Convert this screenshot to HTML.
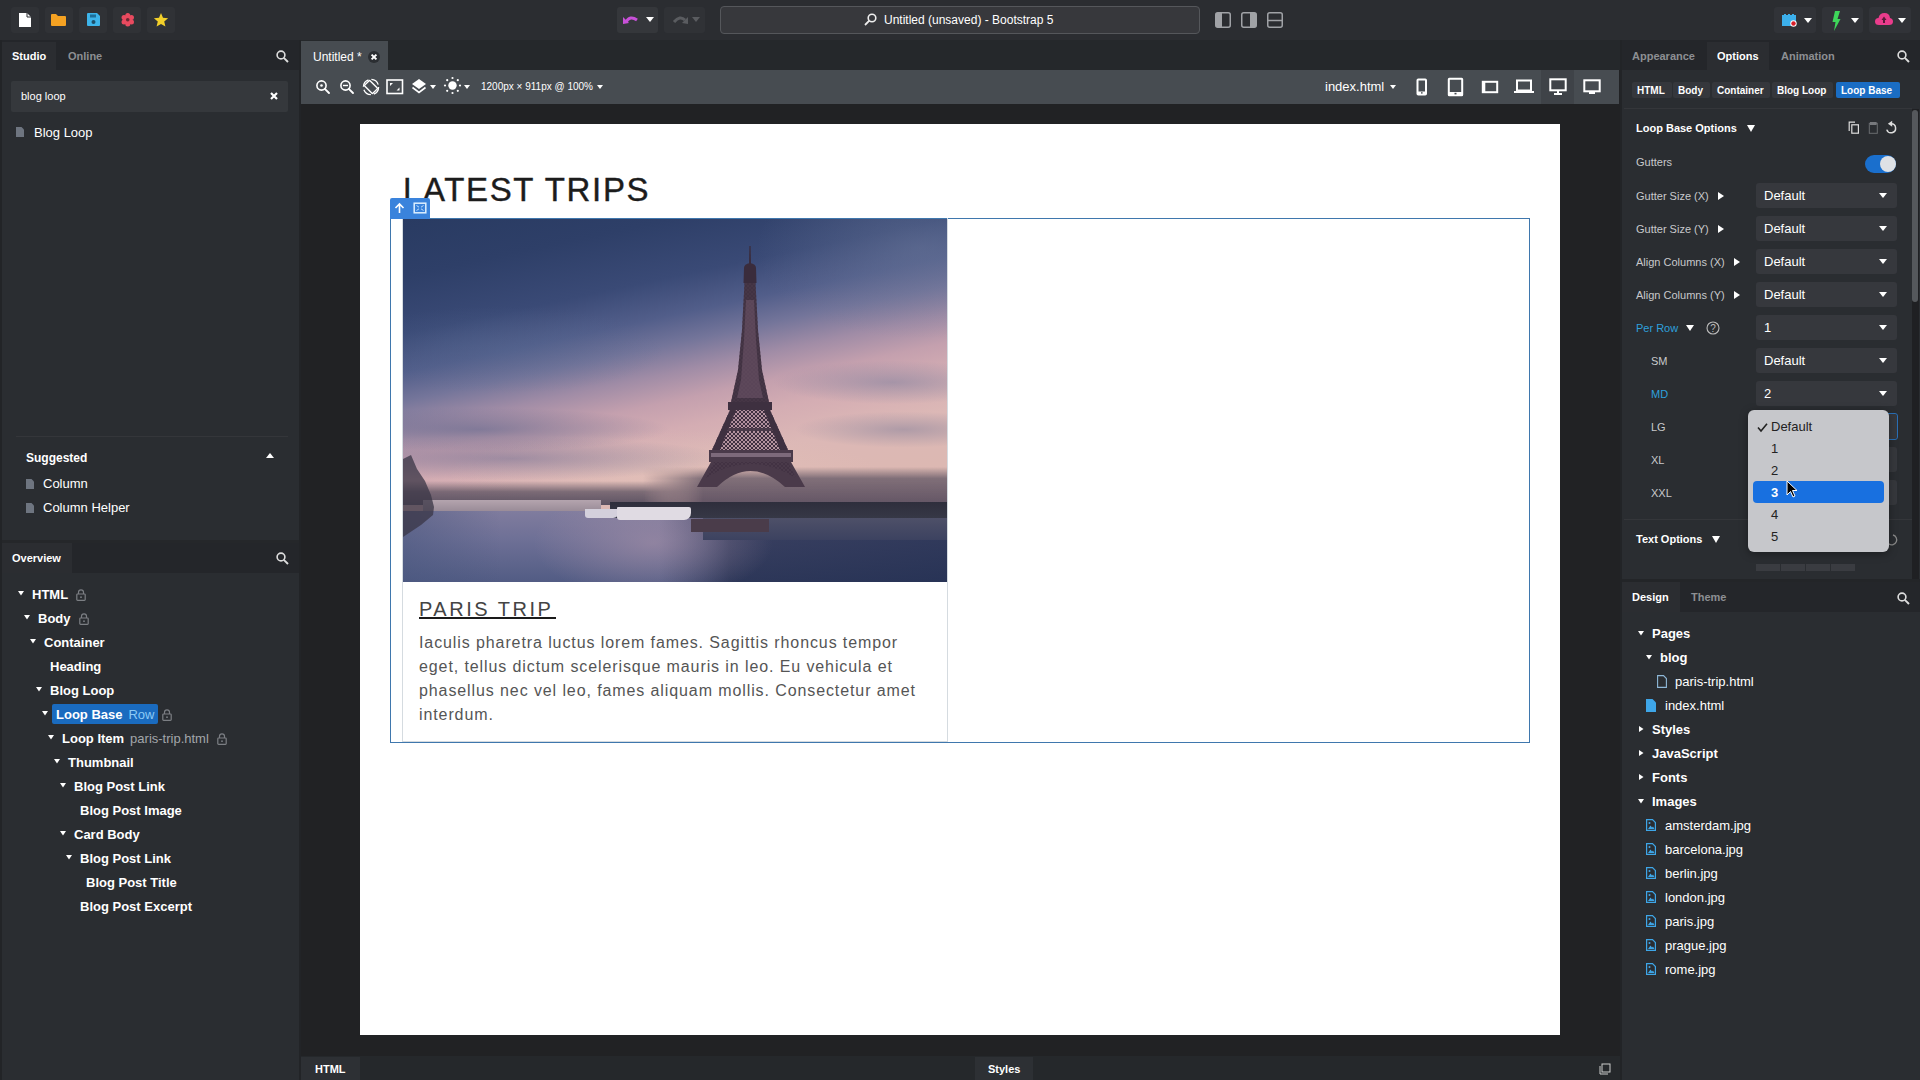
<!DOCTYPE html>
<html><head><meta charset="utf-8">
<style>
*{box-sizing:border-box;margin:0;padding:0}
html,body{width:1920px;height:1080px;overflow:hidden;background:#2a2c30;font-family:"Liberation Sans",sans-serif;color:#fff}
.a{position:absolute}
.t{position:absolute;line-height:1;white-space:nowrap}
svg.a{display:block;overflow:visible}
</style></head><body>

<div class="a" style="left:0px;top:0px;width:1920px;height:40px;background:#2b2d31;"></div>
<div class="a" style="left:11px;top:7px;width:28px;height:26px;background:#303236;border-radius:3px;"></div>
<div class="a" style="left:45px;top:7px;width:28px;height:26px;background:#303236;border-radius:3px;"></div>
<div class="a" style="left:79px;top:7px;width:28px;height:26px;background:#303236;border-radius:3px;"></div>
<div class="a" style="left:113px;top:7px;width:28px;height:26px;background:#303236;border-radius:3px;"></div>
<div class="a" style="left:147px;top:7px;width:28px;height:26px;background:#303236;border-radius:3px;"></div>
<svg class="a" style="left:19px;top:13px;" width="12" height="14" viewBox="0 0 12 14"><path d="M0 0H8L12 4V14H0Z" fill="#fff"/><path d="M8 0V4H12" fill="none" stroke="#2b2d31" stroke-width="1"/></svg>
<svg class="a" style="left:51px;top:14px;" width="15" height="12" viewBox="0 0 15 12"><path d="M0 1Q0 0 1 0H5L7 2H14Q15 2 15 3V11Q15 12 14 12H1Q0 12 0 11Z" fill="#f5a222"/></svg>
<svg class="a" style="left:87px;top:13px;" width="13" height="13" viewBox="0 0 13 13"><path d="M0 1Q0 0 1 0H10L13 3V12Q13 13 12 13H1Q0 13 0 12Z" fill="#3db4ea"/><rect x="3" y="1.5" width="6" height="3" fill="#1d6f9a"/><circle cx="6.5" cy="9" r="2" fill="#1d4f6a"/></svg>
<svg class="a" style="left:120.5px;top:13.25px;" width="13.5" height="13.5" viewBox="0 0 13.5 13.5"><circle cx="6.75" cy="6.75" r="4.6" fill="#e84a5f"/><circle cx="6.75" cy="2.45" r="2.5" fill="#e84a5f"/><circle cx="10.47" cy="4.60" r="2.5" fill="#e84a5f"/><circle cx="10.47" cy="8.90" r="2.5" fill="#e84a5f"/><circle cx="6.75" cy="11.05" r="2.5" fill="#e84a5f"/><circle cx="3.03" cy="8.90" r="2.5" fill="#e84a5f"/><circle cx="3.03" cy="4.60" r="2.5" fill="#e84a5f"/><circle cx="6.75" cy="6.75" r="1.8" fill="#6a2832"/></svg>
<svg class="a" style="left:153px;top:12px;" width="16" height="16" viewBox="0 0 16 16"><polygon points="8.00,1.00 10.00,5.75 15.13,6.18 11.23,9.55 12.41,14.57 8.00,11.90 3.59,14.57 4.77,9.55 0.87,6.18 6.00,5.75" fill="#f3d02a"/></svg>
<div class="a" style="left:617px;top:7px;width:41px;height:26px;background:#35373b;border-radius:3px;"></div>
<div class="a" style="left:664px;top:7px;width:41px;height:26px;background:#303236;border-radius:3px;"></div>
<svg class="a" style="left:623px;top:14px;" width="17" height="10" viewBox="0 0 17 10"><path d="M3 8Q7 1 14 6" fill="none" stroke="#c850d8" stroke-width="3"/><path d="M0 3L6 9L0 10Z" fill="#c850d8"/></svg>
<svg class="a" style="left:646.0px;top:17.0px;" width="8" height="5" viewBox="0 0 8 5"><path d="M0 0H8L4.0 5Z" fill="#fff"/></svg>
<svg class="a" style="left:672px;top:14px;" width="16" height="10" viewBox="0 0 16 10"><path d="M2 8Q8 1 13 6" fill="none" stroke="#5a5c60" stroke-width="3"/><path d="M16 3L10 9L16 10Z" fill="#5a5c60"/></svg>
<svg class="a" style="left:692.0px;top:17.0px;" width="8" height="5" viewBox="0 0 8 5"><path d="M0 0H8L4.0 5Z" fill="#5a5c60"/></svg>
<div class="a" style="left:720px;top:6px;width:480px;height:28px;background:#37383c;border:1px solid #55575b;border-radius:4px;"></div>
<svg class="a" style="left:864px;top:13px;" width="13" height="13" viewBox="0 0 13 13"><circle cx="8" cy="5" r="3.8" fill="none" stroke="#eee" stroke-width="1.6"/><path d="M5.3 7.7L1 12" stroke="#eee" stroke-width="1.8"/></svg>
<div class="t" style="left:884px;top:13.84px;font-size:12px;color:#fff;">Untitled (unsaved) - Bootstrap 5</div>
<svg class="a" style="left:1215px;top:12px;" width="16" height="16" viewBox="0 0 16 16"><rect x="0.75" y="0.75" width="14.5" height="14.5" rx="2" fill="none" stroke="#a0a2a6" stroke-width="1.5"/><rect x="1" y="1" width="6" height="14" fill="#a0a2a6"/></svg>
<svg class="a" style="left:1241px;top:12px;" width="16" height="16" viewBox="0 0 16 16"><rect x="0.75" y="0.75" width="14.5" height="14.5" rx="2" fill="none" stroke="#a0a2a6" stroke-width="1.5"/><rect x="9" y="1" width="6" height="14" fill="#a0a2a6"/></svg>
<svg class="a" style="left:1267px;top:12px;" width="16" height="16" viewBox="0 0 16 16"><rect x="0.75" y="0.75" width="14.5" height="14.5" rx="2" fill="none" stroke="#a0a2a6" stroke-width="1.5"/><path d="M1 8.5H15" stroke="#a0a2a6" stroke-width="1.5"/></svg>
<div class="a" style="left:1774px;top:7px;width:42px;height:26px;background:#313338;border-radius:3px;"></div>
<div class="a" style="left:1822px;top:7px;width:41px;height:26px;background:#313338;border-radius:3px;"></div>
<div class="a" style="left:1869px;top:7px;width:42px;height:26px;background:#313338;border-radius:3px;"></div>
<svg class="a" style="left:1782px;top:14px;" width="15" height="13" viewBox="0 0 15 13"><path d="M0 1H2V0H4V1H6V0H8V1H10V0H12V1H14V12H0Z" fill="#3cb0ec"/><circle cx="11.5" cy="9.5" r="3.2" fill="#fff"/><circle cx="11.5" cy="9.5" r="2.2" fill="#d81e2a"/></svg>
<svg class="a" style="left:1804.0px;top:17.5px;" width="8" height="5" viewBox="0 0 8 5"><path d="M0 0H8L4.0 5Z" fill="#fff"/></svg>
<svg class="a" style="left:1832px;top:11px;" width="9" height="20" viewBox="0 0 9 20"><path d="M3 0H8L5.5 8H8.5L2 20L3.5 11H0.5Z" fill="#3ed65a"/></svg>
<svg class="a" style="left:1851.0px;top:17.5px;" width="8" height="5" viewBox="0 0 8 5"><path d="M0 0H8L4.0 5Z" fill="#fff"/></svg>
<svg class="a" style="left:1875px;top:13px;" width="18" height="12" viewBox="0 0 18 12"><path d="M4 12Q0 12 0 8.5Q0 5 3.5 5Q4.5 0 9.5 0Q14.5 0 15 5Q18 5.5 18 8.5Q18 12 14 12Z" fill="#ea3c8c"/><path d="M9 3.5L6.5 7H8V10H10V7H11.5Z" fill="#5a1a3a"/></svg>
<svg class="a" style="left:1898.0px;top:17.5px;" width="8" height="5" viewBox="0 0 8 5"><path d="M0 0H8L4.0 5Z" fill="#fff"/></svg>
<div class="a" style="left:0px;top:40px;width:300px;height:1040px;background:#2a2d31;"></div>
<div class="a" style="left:0px;top:40px;width:2px;height:1040px;background:#222427;"></div>
<div class="a" style="left:299px;top:40px;width:2px;height:1040px;background:#222427;"></div>
<div class="a" style="left:2px;top:40px;width:297px;height:30px;background:#24262a;"></div>
<div class="a" style="left:2px;top:42px;width:54px;height:28px;background:#2b2d31;"></div>
<div class="t" style="left:12px;top:50.69px;font-size:11px;font-weight:bold;color:#fff;">Studio</div>
<div class="t" style="left:68px;top:50.69px;font-size:11px;font-weight:bold;color:#8d8f93;">Online</div>
<svg class="a" style="left:276px;top:50px;" width="13" height="13" viewBox="0 0 13 13"><circle cx="5" cy="5" r="3.9" fill="none" stroke="#ddd" stroke-width="1.6"/><path d="M7.8 7.8L12 12" stroke="#ddd" stroke-width="1.9"/></svg>
<div class="a" style="left:11px;top:81px;width:277px;height:31px;background:#35383c;border-radius:2px;"></div>
<div class="t" style="left:21px;top:91.19px;font-size:11px;color:#fff;">blog loop</div>
<svg class="a" style="left:270px;top:92px;" width="8" height="8" viewBox="0 0 8 8"><path d="M1 1L7 7M7 1L1 7" stroke="#fff" stroke-width="2.2"/></svg>
<svg class="a" style="left:16px;top:127px;" width="8" height="10" viewBox="0 0 8 10"><path d="M0 0H5.5L8 2.5V10H0Z" fill="#6e7580"/></svg>
<div class="t" style="left:34px;top:126.00px;font-size:13px;color:#fff;">Blog Loop</div>
<div class="a" style="left:16px;top:436px;width:272px;height:1px;background:#34363a;"></div>
<div class="t" style="left:26px;top:451.84px;font-size:12px;font-weight:bold;color:#fff;">Suggested</div>
<svg class="a" style="left:266.0px;top:452.5px;" width="8" height="5" viewBox="0 0 8 5"><path d="M0 5H8L4.0 0Z" fill="#fff"/></svg>
<svg class="a" style="left:26px;top:479px;" width="8" height="10" viewBox="0 0 8 10"><path d="M0 0H5.5L8 2.5V10H0Z" fill="#6e7580"/></svg>
<div class="t" style="left:43px;top:477.00px;font-size:13px;color:#fff;">Column</div>
<svg class="a" style="left:26px;top:503px;" width="8" height="10" viewBox="0 0 8 10"><path d="M0 0H5.5L8 2.5V10H0Z" fill="#6e7580"/></svg>
<div class="t" style="left:43px;top:501.00px;font-size:13px;color:#fff;">Column Helper</div>
<div class="a" style="left:2px;top:540px;width:297px;height:3px;background:#25272a;"></div>
<div class="a" style="left:2px;top:543px;width:297px;height:30px;background:#24262a;"></div>
<div class="a" style="left:2px;top:543px;width:70px;height:30px;background:#2b2d31;"></div>
<div class="t" style="left:12px;top:552.69px;font-size:11px;font-weight:bold;color:#fff;">Overview</div>
<svg class="a" style="left:276px;top:552px;" width="13" height="13" viewBox="0 0 13 13"><circle cx="5" cy="5" r="3.9" fill="none" stroke="#ddd" stroke-width="1.6"/><path d="M7.8 7.8L12 12" stroke="#ddd" stroke-width="1.9"/></svg>
<svg class="a" style="left:18.0px;top:590.75px;" width="6" height="4.5" viewBox="0 0 6 4.5"><path d="M0 0H6L3.0 4.5Z" fill="#fff"/></svg>
<div class="t" style="left:32px;top:588.00px;font-size:13px;font-weight:bold;color:#fff;">HTML</div>
<svg class="a" style="left:76.09375px;top:588.5px;" width="10" height="12" viewBox="0 0 10 12"><path d="M2.5 5V3.2Q2.5 0.8 5 0.8Q7.5 0.8 7.5 3.2V5" fill="none" stroke="#7c7f84" stroke-width="1.2"/><rect x="0.8" y="5" width="8.4" height="6.4" rx="0.8" fill="none" stroke="#7c7f84" stroke-width="1.2"/><circle cx="5" cy="8.2" r="0.9" fill="#7c7f84"/></svg>
<svg class="a" style="left:24.0px;top:614.75px;" width="6" height="4.5" viewBox="0 0 6 4.5"><path d="M0 0H6L3.0 4.5Z" fill="#fff"/></svg>
<div class="t" style="left:38px;top:612.00px;font-size:13px;font-weight:bold;color:#fff;">Body</div>
<svg class="a" style="left:78.5px;top:612.5px;" width="10" height="12" viewBox="0 0 10 12"><path d="M2.5 5V3.2Q2.5 0.8 5 0.8Q7.5 0.8 7.5 3.2V5" fill="none" stroke="#7c7f84" stroke-width="1.2"/><rect x="0.8" y="5" width="8.4" height="6.4" rx="0.8" fill="none" stroke="#7c7f84" stroke-width="1.2"/><circle cx="5" cy="8.2" r="0.9" fill="#7c7f84"/></svg>
<svg class="a" style="left:30.0px;top:638.75px;" width="6" height="4.5" viewBox="0 0 6 4.5"><path d="M0 0H6L3.0 4.5Z" fill="#fff"/></svg>
<div class="t" style="left:44px;top:636.00px;font-size:13px;font-weight:bold;color:#fff;">Container</div>
<div class="t" style="left:50px;top:660.00px;font-size:13px;font-weight:bold;color:#fff;">Heading</div>
<svg class="a" style="left:36.0px;top:686.75px;" width="6" height="4.5" viewBox="0 0 6 4.5"><path d="M0 0H6L3.0 4.5Z" fill="#fff"/></svg>
<div class="t" style="left:50px;top:684.00px;font-size:13px;font-weight:bold;color:#fff;">Blog Loop</div>
<div class="a" style="left:52px;top:704px;width:106px;height:20px;background:#1a6bbf;border-radius:2px;"></div>
<svg class="a" style="left:42.0px;top:710.75px;" width="6" height="4.5" viewBox="0 0 6 4.5"><path d="M0 0H6L3.0 4.5Z" fill="#fff"/></svg>
<div class="t" style="left:56px;top:708.00px;font-size:13px;font-weight:bold;color:#fff;">Loop Base</div>
<div class="t" style="left:128.453125px;top:708.00px;font-size:13px;color:#8ccaf5;">Row</div>
<svg class="a" style="left:162.46875px;top:708.5px;" width="10" height="12" viewBox="0 0 10 12"><path d="M2.5 5V3.2Q2.5 0.8 5 0.8Q7.5 0.8 7.5 3.2V5" fill="none" stroke="#7c7f84" stroke-width="1.2"/><rect x="0.8" y="5" width="8.4" height="6.4" rx="0.8" fill="none" stroke="#7c7f84" stroke-width="1.2"/><circle cx="5" cy="8.2" r="0.9" fill="#7c7f84"/></svg>
<svg class="a" style="left:48.0px;top:734.75px;" width="6" height="4.5" viewBox="0 0 6 4.5"><path d="M0 0H6L3.0 4.5Z" fill="#fff"/></svg>
<div class="t" style="left:62px;top:732.00px;font-size:13px;font-weight:bold;color:#fff;">Loop Item</div>
<div class="t" style="left:130.09375px;top:732.00px;font-size:13px;color:#a3a6aa;">paris-trip.html</div>
<svg class="a" style="left:216.84375px;top:732.5px;" width="10" height="12" viewBox="0 0 10 12"><path d="M2.5 5V3.2Q2.5 0.8 5 0.8Q7.5 0.8 7.5 3.2V5" fill="none" stroke="#7c7f84" stroke-width="1.2"/><rect x="0.8" y="5" width="8.4" height="6.4" rx="0.8" fill="none" stroke="#7c7f84" stroke-width="1.2"/><circle cx="5" cy="8.2" r="0.9" fill="#7c7f84"/></svg>
<svg class="a" style="left:54.0px;top:758.75px;" width="6" height="4.5" viewBox="0 0 6 4.5"><path d="M0 0H6L3.0 4.5Z" fill="#fff"/></svg>
<div class="t" style="left:68px;top:756.00px;font-size:13px;font-weight:bold;color:#fff;">Thumbnail</div>
<svg class="a" style="left:60.0px;top:782.75px;" width="6" height="4.5" viewBox="0 0 6 4.5"><path d="M0 0H6L3.0 4.5Z" fill="#fff"/></svg>
<div class="t" style="left:74px;top:780.00px;font-size:13px;font-weight:bold;color:#fff;">Blog Post Link</div>
<div class="t" style="left:80px;top:804.00px;font-size:13px;font-weight:bold;color:#fff;">Blog Post Image</div>
<svg class="a" style="left:60.0px;top:830.75px;" width="6" height="4.5" viewBox="0 0 6 4.5"><path d="M0 0H6L3.0 4.5Z" fill="#fff"/></svg>
<div class="t" style="left:74px;top:828.00px;font-size:13px;font-weight:bold;color:#fff;">Card Body</div>
<svg class="a" style="left:66.0px;top:854.75px;" width="6" height="4.5" viewBox="0 0 6 4.5"><path d="M0 0H6L3.0 4.5Z" fill="#fff"/></svg>
<div class="t" style="left:80px;top:852.00px;font-size:13px;font-weight:bold;color:#fff;">Blog Post Link</div>
<div class="t" style="left:86px;top:876.00px;font-size:13px;font-weight:bold;color:#fff;">Blog Post Title</div>
<div class="t" style="left:80px;top:900.00px;font-size:13px;font-weight:bold;color:#fff;">Blog Post Excerpt</div>
<div class="a" style="left:301px;top:40px;width:1319px;height:1040px;background:#212224;"></div>
<div class="a" style="left:301px;top:40px;width:1319px;height:30px;background:#25282b;"></div>
<div class="a" style="left:301px;top:41px;width:87px;height:29px;background:#474c51;"></div>
<div class="t" style="left:313px;top:50.84px;font-size:12px;color:#fff;">Untitled *</div>
<svg class="a" style="left:368px;top:50.5px;" width="12" height="12" viewBox="0 0 12 12"><circle cx="6" cy="6" r="6" fill="#2b2e32"/><path d="M3.6 3.6L8.4 8.4M8.4 3.6L3.6 8.4" stroke="#fff" stroke-width="2"/></svg>
<div class="a" style="left:301px;top:70px;width:1318px;height:34px;background:#474c51;"></div>
<svg class="a" style="left:314.5px;top:78.5px;" width="16" height="16" viewBox="0 0 16 16"><circle cx="6.5" cy="6.5" r="4.6" fill="none" stroke="#fff" stroke-width="1.6"/><path d="M9.8 9.8L14 14" stroke="#fff" stroke-width="1.9" stroke-linecap="round"/><circle cx="6.5" cy="6.5" r="1.3" fill="#fff"/></svg>
<svg class="a" style="left:338.5px;top:78.5px;" width="16" height="16" viewBox="0 0 16 16"><circle cx="6.5" cy="6.5" r="4.6" fill="none" stroke="#fff" stroke-width="1.6"/><path d="M9.8 9.8L14 14" stroke="#fff" stroke-width="1.9" stroke-linecap="round"/><path d="M4 6.5H9" stroke="#fff" stroke-width="1.4"/></svg>
<svg class="a" style="left:362px;top:78px;" width="18" height="18" viewBox="0 0 18 18"><circle cx="9" cy="9" r="7.6" fill="none" stroke="#fff" stroke-width="1.3" stroke-dasharray="9 3"/><rect x="5.2" y="3.2" width="7.6" height="11.6" rx="1" transform="rotate(-45 9 9)" fill="none" stroke="#fff" stroke-width="1.4"/></svg>
<svg class="a" style="left:386px;top:79px;" width="18" height="16" viewBox="0 0 18 16"><rect x="1" y="1" width="15.5" height="13.5" fill="none" stroke="#fff" stroke-width="1.6"/><path d="M4 4L7 4L4 7Z M13.5 11.5L10.5 11.5L13.5 8.5Z" fill="#fff"/></svg>
<svg class="a" style="left:411px;top:78px;" width="16" height="17" viewBox="0 0 16 17"><path d="M8 1L15 6L8 11L1 6Z" fill="#fff"/><path d="M1.5 9.5L8 14.5L14.5 9.5" fill="none" stroke="#fff" stroke-width="1.6"/></svg>
<svg class="a" style="left:430.0px;top:85.0px;" width="6" height="4" viewBox="0 0 6 4"><path d="M0 0H6L3.0 4Z" fill="#fff"/></svg>
<svg class="a" style="left:444px;top:77px;" width="17" height="17" viewBox="0 0 17 17"><circle cx="8.5" cy="8.5" r="4.2" fill="#fff"/><circle cx="16.00" cy="8.50" r="1.1" fill="#fff"/><circle cx="13.80" cy="13.80" r="1.1" fill="#fff"/><circle cx="8.50" cy="16.00" r="1.1" fill="#fff"/><circle cx="3.20" cy="13.80" r="1.1" fill="#fff"/><circle cx="1.00" cy="8.50" r="1.1" fill="#fff"/><circle cx="3.20" cy="3.20" r="1.1" fill="#fff"/><circle cx="8.50" cy="1.00" r="1.1" fill="#fff"/><circle cx="13.80" cy="3.20" r="1.1" fill="#fff"/></svg>
<svg class="a" style="left:464.0px;top:85.0px;" width="6" height="4" viewBox="0 0 6 4"><path d="M0 0H6L3.0 4Z" fill="#fff"/></svg>
<div class="t" style="left:481px;top:81.53px;font-size:10px;color:#fff;">1200px × 911px @ 100%</div>
<svg class="a" style="left:597.0px;top:85.0px;" width="6" height="4" viewBox="0 0 6 4"><path d="M0 0H6L3.0 4Z" fill="#fff"/></svg>
<div class="t" style="left:1325px;top:80.00px;font-size:13px;color:#fff;">index.html</div>
<svg class="a" style="left:1390.0px;top:85.0px;" width="6" height="4" viewBox="0 0 6 4"><path d="M0 0H6L3.0 4Z" fill="#fff"/></svg>
<div class="a" style="left:1707px;top:70px;width:0px;height:0px;background:#000;"></div>
<div class="a" style="left:1541px;top:70px;width:33px;height:34px;background:#3f4348;"></div>
<svg class="a" style="left:1416px;top:78px;" width="12" height="18" viewBox="0 0 12 18"><rect x="1.5" y="1.5" width="8.5" height="15" rx="0.8" fill="none" stroke="#fff" stroke-width="2"/><rect x="1.5" y="13.5" width="8.5" height="3" fill="#fff"/><rect x="5" y="14.2" width="1.6" height="1.4" fill="#474c51"/></svg>
<svg class="a" style="left:1447px;top:77px;" width="17" height="20" viewBox="0 0 17 20"><rect x="1.8" y="1.8" width="13.4" height="16.4" rx="0.5" fill="none" stroke="#fff" stroke-width="2"/><rect x="1.8" y="15" width="13.4" height="3.2" fill="#fff"/><rect x="7.5" y="15.8" width="2" height="1.6" fill="#474c51"/></svg>
<svg class="a" style="left:1481px;top:80px;" width="18" height="14" viewBox="0 0 18 14"><rect x="1.8" y="1.8" width="14.4" height="10.4" fill="none" stroke="#fff" stroke-width="2"/><rect x="1.8" y="1.8" width="2.5" height="10.4" fill="#fff"/></svg>
<svg class="a" style="left:1514px;top:79px;" width="20" height="15" viewBox="0 0 20 15"><rect x="3" y="1.5" width="14" height="10" fill="none" stroke="#fff" stroke-width="2"/><path d="M0 13H20" stroke="#fff" stroke-width="2"/></svg>
<svg class="a" style="left:1549px;top:78px;" width="18" height="18" viewBox="0 0 18 18"><rect x="1.3" y="1.3" width="15.4" height="11" fill="none" stroke="#fff" stroke-width="2"/><path d="M9 12.5V15M5 16H13" stroke="#fff" stroke-width="2"/></svg>
<svg class="a" style="left:1583px;top:79px;" width="18" height="16" viewBox="0 0 18 16"><rect x="1.3" y="1.3" width="15.4" height="11" fill="none" stroke="#fff" stroke-width="2"/><path d="M6 14H12" stroke="#fff" stroke-width="2"/></svg>
<div class="a" style="left:360px;top:124px;width:1200px;height:911px;background:#fff;"></div>
<div class="t" style="left:403px;top:173.07px;font-size:33px;color:#1c1c1c;letter-spacing:1.65px;-webkit-text-stroke:0.4px #1c1c1c;">LATEST TRIPS</div>
<div class="a" style="left:390px;top:218px;width:1140px;height:525px;background:transparent;border:1px solid #3f77ad;"></div>
<div class="a" style="left:402px;top:218px;width:546px;height:524px;background:transparent;border:1px solid #d5dbe0;border-top:none;"></div>
<div class="a" style="left:403px;top:219px;width:544px;height:363px;overflow:hidden;background:linear-gradient(168deg,#293b62 0%,#2e3f68 12%,#3a4a76 24%,#525e8a 32%,#74759a 38%,#a08ca6 44%,#c4a0ae 50%,#d4adb3 56%,#dcb8b6 64%,#dcb8b2 75%,#d8b4ae 100%);"><div class="a" style="left:0;top:0;width:544px;height:363px;background:radial-gradient(ellipse 30% 25% at 95% 8%,rgba(105,118,152,.5),rgba(105,118,152,0) 100%),radial-gradient(ellipse 30% 12% at 18% 36%,rgba(85,105,145,.35),rgba(85,105,145,0) 100%),radial-gradient(ellipse 22% 6% at 90% 45%,rgba(128,128,158,.55),rgba(128,128,158,0) 100%),radial-gradient(ellipse 20% 5% at 92% 58%,rgba(120,120,150,.45),rgba(120,120,150,0) 100%),radial-gradient(ellipse 35% 6% at 14% 58%,rgba(88,98,138,.55),rgba(88,98,138,0) 100%),radial-gradient(ellipse 40% 6% at 20% 66%,rgba(95,100,140,.45),rgba(95,100,140,0) 100%),radial-gradient(ellipse 40% 12% at 48% 70%,rgba(232,198,186,.45),rgba(232,198,186,0) 100%)"></div><div class="a" style="left:0;top:262px;width:300px;height:24px;background:linear-gradient(180deg,rgba(90,80,96,0) 0%,rgba(90,80,96,.75) 45%,#5c5262 100%);-webkit-mask-image:linear-gradient(90deg,#000 240px,transparent 300px)"></div><div class="a" style="left:240px;top:248px;width:304px;height:38px;background:linear-gradient(180deg,rgba(120,105,118,0) 0%,rgba(112,98,110,.85) 30%,#625464 100%);-webkit-mask-image:linear-gradient(90deg,transparent 0,#000 60px)"></div><div class="a" style="left:20px;top:281px;width:178px;height:11px;background:linear-gradient(180deg,#b4a4ae 0%,#9a8c98 100%)"></div><div class="a" style="left:0;top:292px;width:544px;height:71px;background:linear-gradient(180deg,#807c9e 0%,#6e7096 40%,#525c84 100%)"></div><div class="a" style="left:0;top:292px;width:544px;height:71px;background:radial-gradient(ellipse 22% 80% at 46% 45%,rgba(168,145,168,.6),rgba(168,145,168,0) 100%),linear-gradient(90deg,rgba(70,85,125,.5) 0%,rgba(70,85,125,0) 18%),linear-gradient(90deg,rgba(18,28,55,0) 47%,rgba(22,32,62,.62) 60%,rgba(22,34,66,.7) 100%)"></div><svg class="a" style="left:0;top:0" width="544" height="363"><path d="M0 240L8 236L14 250L22 262L28 276L31 288L30 296L18 306L6 314L0 318Z" fill="#3a3646" opacity=".75"/></svg><div class="a" style="left:207px;top:283px;width:337px;height:16px;background:linear-gradient(180deg,#2e2e3c 0%,#363846 100%)"></div><div class="a" style="left:300px;top:299px;width:244px;height:22px;background:linear-gradient(180deg,#4e5068 0%,#3c4260 100%)"></div><div class="a" style="left:182px;top:290px;width:34px;height:9px;background:#d4d0dc;border-radius:0 0 6px 3px"></div><div class="a" style="left:214px;top:288px;width:74px;height:13px;background:#e0dbe3;border-radius:1px 2px 7px 3px"></div><div class="a" style="left:288px;top:300px;width:78px;height:13px;background:#4a3c4a"></div></div>
<svg class="a" style="left:690px;top:240px" width="120" height="250" viewBox="690 240 120 250"><defs><pattern id="lat" width="4" height="4" patternUnits="userSpaceOnUse"><path d="M0 0L4 4M4 0L0 4" stroke="#3e2f40" stroke-width="1"/></pattern></defs><path d="M749.4 246H750.6L751 264H749Z" fill="#3a2c3c"/><path d="M744 268Q744 264 750 263Q756 264 756 268L756.5 283H743.5Z" fill="#3a2c3c"/><path d="M744.5 283H755.5L758 330L762 370L769 402H731L738 370L742 330Z" fill="#463646"/><path d="M744.5 283H755.5L758 330L762 370L769 402H731L738 370L742 330Z" fill="url(#lat)" opacity=".6"/><path d="M746 300H754L756 340L759 380L763 398H737L741 380L744 340Z" fill="#8a6a80" opacity=".35"/><rect x="728" y="402" width="44" height="8" fill="#3e3040"/><path d="M730 410H770L788 450H712Z" fill="#9a7c90" opacity=".6"/><path d="M730 410H770L788 450H712Z" fill="url(#lat)"/><path d="M730 410H736L720 450H712Z M770 410H764L780 450H788Z" fill="#3e3040"/><rect x="728" y="428" width="44" height="3" fill="#4a3a4a"/><rect x="709" y="450" width="84" height="12" fill="#4a3a4a"/><rect x="711" y="453" width="80" height="4" fill="#b09aac" opacity=".5"/><path d="M711 462H791L805 487H785Q750 455 717 487H697Z" fill="#4a3a4a"/><path d="M714 462H788L796 478Q750 450 706 478Z" fill="url(#lat)" opacity=".7"/></svg>
<div class="t" style="left:419px;top:599.07px;font-size:20px;color:#444;letter-spacing:2.5px;">PARIS TRIP</div>
<div class="a" style="left:419px;top:617px;width:137px;height:2px;background:#1a1a1a;"></div>
<div class="t" style="left:419px;top:634.96px;font-size:16px;color:#555;letter-spacing:0.9px;">Iaculis pharetra luctus lorem fames. Sagittis rhoncus tempor</div>
<div class="t" style="left:419px;top:658.96px;font-size:16px;color:#555;letter-spacing:0.9px;">eget, tellus dictum scelerisque mauris in leo. Eu vehicula et</div>
<div class="t" style="left:419px;top:682.96px;font-size:16px;color:#555;letter-spacing:0.9px;">phasellus nec vel leo, fames aliquam mollis. Consectetur amet</div>
<div class="t" style="left:419px;top:706.96px;font-size:16px;color:#555;letter-spacing:0.9px;">interdum.</div>
<div class="a" style="left:390px;top:198px;width:40px;height:21px;background:#3a83dc;border-radius:2px 2px 0 0;"></div>
<svg class="a" style="left:394px;top:202px;" width="11" height="12" viewBox="0 0 11 12"><path d="M5.5 11V2M1.5 6L5.5 2L9.5 6" fill="none" stroke="#fff" stroke-width="1.6"/></svg>
<svg class="a" style="left:413px;top:202px;" width="14" height="12" viewBox="0 0 14 12"><rect x="1.2" y="1.2" width="11.6" height="9.6" fill="none" stroke="#dff0ff" stroke-width="1.5"/><path d="M3.5 3.5L6 5.2M10.5 3.5L8 5.2M3.5 8.5L6 6.8M10.5 8.5L8 6.8" stroke="#bfe0ff" stroke-width="1"/></svg>
<div class="a" style="left:301px;top:1056px;width:1319px;height:24px;background:#25282b;"></div>
<div class="a" style="left:301px;top:1057px;width:59px;height:23px;background:#2d3034;"></div>
<div class="t" style="left:315px;top:1063.69px;font-size:11px;font-weight:bold;color:#fff;">HTML</div>
<div class="a" style="left:975px;top:1057px;width:58px;height:23px;background:#2d3034;"></div>
<div class="t" style="left:988px;top:1063.69px;font-size:11px;font-weight:bold;color:#fff;">Styles</div>
<svg class="a" style="left:1599px;top:1063px;" width="12" height="12" viewBox="0 0 12 12"><rect x="3" y="1" width="8" height="8" fill="none" stroke="#ccc" stroke-width="1"/><path d="M1 3V11H9" fill="none" stroke="#ccc" stroke-width="1"/></svg>
<div class="a" style="left:1620px;top:40px;width:300px;height:1040px;background:#2a2d31;"></div>
<div class="a" style="left:1620px;top:40px;width:2px;height:1040px;background:#222427;"></div>
<div class="a" style="left:1622px;top:40px;width:298px;height:30px;background:#24262a;"></div>
<div class="a" style="left:1707px;top:42px;width:62px;height:28px;background:#2b2d31;"></div>
<div class="t" style="left:1632px;top:50.69px;font-size:11px;font-weight:bold;color:#8d8f93;">Appearance</div>
<div class="t" style="left:1717px;top:50.69px;font-size:11px;font-weight:bold;color:#fff;">Options</div>
<div class="t" style="left:1781px;top:50.69px;font-size:11px;font-weight:bold;color:#8d8f93;">Animation</div>
<svg class="a" style="left:1897px;top:50px;" width="13" height="13" viewBox="0 0 13 13"><circle cx="5" cy="5" r="3.9" fill="none" stroke="#ddd" stroke-width="1.6"/><path d="M7.8 7.8L12 12" stroke="#ddd" stroke-width="1.9"/></svg>
<div class="a" style="left:1632px;top:82px;width:40px;height:16px;background:#35373c;border-radius:2px;"></div>
<div class="t" style="left:1637px;top:85.53px;font-size:10px;font-weight:bold;color:#fff;">HTML</div>
<div class="a" style="left:1673px;top:82px;width:37px;height:16px;background:#35373c;border-radius:2px;"></div>
<div class="t" style="left:1678px;top:85.53px;font-size:10px;font-weight:bold;color:#fff;">Body</div>
<div class="a" style="left:1712px;top:82px;width:58px;height:16px;background:#35373c;border-radius:2px;"></div>
<div class="t" style="left:1717px;top:85.53px;font-size:10px;font-weight:bold;color:#fff;">Container</div>
<div class="a" style="left:1772px;top:82px;width:61px;height:16px;background:#35373c;border-radius:2px;"></div>
<div class="t" style="left:1777px;top:85.53px;font-size:10px;font-weight:bold;color:#fff;">Blog Loop</div>
<div class="a" style="left:1836px;top:82px;width:64px;height:16px;background:#1a6dc4;border-radius:2px;"></div>
<div class="t" style="left:1841px;top:85.53px;font-size:10px;font-weight:bold;color:#fff;">Loop Base</div>
<div class="a" style="left:1624px;top:108px;width:288px;height:1px;background:#34363a;"></div>
<div class="a" style="left:1912px;top:109px;width:7px;height:471px;background:#1f2023;"></div>
<div class="a" style="left:1912px;top:110px;width:6px;height:192px;background:#55585c;border-radius:3px;"></div>
<div class="t" style="left:1636px;top:122.69px;font-size:11px;font-weight:bold;color:#fff;">Loop Base Options</div>
<svg class="a" style="left:1747.0px;top:124.5px;" width="8" height="7" viewBox="0 0 8 7"><path d="M0 0H8L4.0 7Z" fill="#fff"/></svg>
<svg class="a" style="left:1848px;top:121px;" width="12" height="13" viewBox="0 0 12 13"><path d="M1.2 10V1.2H7" fill="none" stroke="#ddd" stroke-width="1.2"/><rect x="3.8" y="3.8" width="6.6" height="8.4" fill="none" stroke="#ddd" stroke-width="1.2"/></svg>
<svg class="a" style="left:1868px;top:121px;" width="11" height="13" viewBox="0 0 11 13"><rect x="1.3" y="2.3" width="8" height="10" fill="none" stroke="#6a6c70" stroke-width="1"/><rect x="2" y="1" width="6.6" height="3" fill="#77797d"/></svg>
<svg class="a" style="left:1885px;top:120px;" width="12" height="14" viewBox="0 0 12 14"><path d="M1.8 9.6A4.5 4.5 0 1 0 6 3.8" fill="none" stroke="#ddd" stroke-width="1.5"/><path d="M7.2 0.8L2.9 3.8L7.2 6.8Z" fill="#ddd"/></svg>
<div class="t" style="left:1636px;top:156.69px;font-size:11px;color:#c8c9cc;">Gutters</div>
<div class="a" style="left:1865px;top:155px;width:31px;height:18px;background:#1a6fcd;border-radius:9px;"></div>
<div class="a" style="left:1880px;top:156px;width:16px;height:16px;border-radius:8px;background:#dfe1e5"></div>
<div class="a" style="left:1756px;top:183px;width:141px;height:25px;background:#36383d;border-radius:3px;"></div>
<div class="t" style="left:1764px;top:189.00px;font-size:13px;color:#fff;">Default</div>
<svg class="a" style="left:1879.0px;top:193.0px;" width="8" height="5" viewBox="0 0 8 5"><path d="M0 0H8L4.0 5Z" fill="#fff"/></svg>
<div class="t" style="left:1636px;top:190.69px;font-size:11px;color:#c8c9cc;">Gutter Size (X)</div>
<svg class="a" style="left:1718.0px;top:191.5px;" width="6" height="8" viewBox="0 0 6 8"><path d="M0 0V8L6 4.0Z" fill="#fff"/></svg>
<div class="a" style="left:1756px;top:216px;width:141px;height:25px;background:#36383d;border-radius:3px;"></div>
<div class="t" style="left:1764px;top:222.00px;font-size:13px;color:#fff;">Default</div>
<svg class="a" style="left:1879.0px;top:226.0px;" width="8" height="5" viewBox="0 0 8 5"><path d="M0 0H8L4.0 5Z" fill="#fff"/></svg>
<div class="t" style="left:1636px;top:223.69px;font-size:11px;color:#c8c9cc;">Gutter Size (Y)</div>
<svg class="a" style="left:1718.0px;top:224.5px;" width="6" height="8" viewBox="0 0 6 8"><path d="M0 0V8L6 4.0Z" fill="#fff"/></svg>
<div class="a" style="left:1756px;top:249px;width:141px;height:25px;background:#36383d;border-radius:3px;"></div>
<div class="t" style="left:1764px;top:255.00px;font-size:13px;color:#fff;">Default</div>
<svg class="a" style="left:1879.0px;top:259.0px;" width="8" height="5" viewBox="0 0 8 5"><path d="M0 0H8L4.0 5Z" fill="#fff"/></svg>
<div class="t" style="left:1636px;top:256.69px;font-size:11px;color:#c8c9cc;">Align Columns (X)</div>
<svg class="a" style="left:1734.0px;top:257.5px;" width="6" height="8" viewBox="0 0 6 8"><path d="M0 0V8L6 4.0Z" fill="#fff"/></svg>
<div class="a" style="left:1756px;top:282px;width:141px;height:25px;background:#36383d;border-radius:3px;"></div>
<div class="t" style="left:1764px;top:288.00px;font-size:13px;color:#fff;">Default</div>
<svg class="a" style="left:1879.0px;top:292.0px;" width="8" height="5" viewBox="0 0 8 5"><path d="M0 0H8L4.0 5Z" fill="#fff"/></svg>
<div class="t" style="left:1636px;top:289.69px;font-size:11px;color:#c8c9cc;">Align Columns (Y)</div>
<svg class="a" style="left:1734.0px;top:290.5px;" width="6" height="8" viewBox="0 0 6 8"><path d="M0 0V8L6 4.0Z" fill="#fff"/></svg>
<div class="a" style="left:1756px;top:315px;width:141px;height:25px;background:#36383d;border-radius:3px;"></div>
<div class="t" style="left:1764px;top:321.00px;font-size:13px;color:#fff;">1</div>
<svg class="a" style="left:1879.0px;top:325.0px;" width="8" height="5" viewBox="0 0 8 5"><path d="M0 0H8L4.0 5Z" fill="#fff"/></svg>
<div class="t" style="left:1636px;top:322.69px;font-size:11px;color:#2ea0dc;">Per Row</div>
<svg class="a" style="left:1686.0px;top:324.5px;" width="8" height="6" viewBox="0 0 8 6"><path d="M0 0H8L4.0 6Z" fill="#fff"/></svg>
<svg class="a" style="left:1706px;top:321px;" width="14" height="14" viewBox="0 0 14 14"><circle cx="7" cy="7" r="6" fill="none" stroke="#bbb" stroke-width="1.1"/><text x="7" y="10.6" font-size="10" text-anchor="middle" fill="#bbb" font-family="Liberation Sans">?</text></svg>
<div class="a" style="left:1756px;top:348px;width:141px;height:25px;background:#36383d;border-radius:3px;"></div>
<div class="t" style="left:1764px;top:354.00px;font-size:13px;color:#fff;">Default</div>
<svg class="a" style="left:1879.0px;top:358.0px;" width="8" height="5" viewBox="0 0 8 5"><path d="M0 0H8L4.0 5Z" fill="#fff"/></svg>
<div class="t" style="left:1651px;top:355.69px;font-size:11px;color:#c8c9cc;">SM</div>
<div class="a" style="left:1756px;top:381px;width:141px;height:25px;background:#36383d;border-radius:3px;"></div>
<div class="t" style="left:1764px;top:387.00px;font-size:13px;color:#fff;">2</div>
<svg class="a" style="left:1879.0px;top:391.0px;" width="8" height="5" viewBox="0 0 8 5"><path d="M0 0H8L4.0 5Z" fill="#fff"/></svg>
<div class="t" style="left:1651px;top:388.69px;font-size:11px;color:#2ea0dc;">MD</div>
<div class="a" style="left:1756px;top:414px;width:141px;height:25px;background:#36383d;border-radius:3px;"></div>
<div class="t" style="left:1651px;top:421.69px;font-size:11px;color:#c8c9cc;">LG</div>
<div class="a" style="left:1756px;top:447px;width:141px;height:25px;background:#36383d;border-radius:3px;"></div>
<div class="t" style="left:1651px;top:454.69px;font-size:11px;color:#c8c9cc;">XL</div>
<div class="a" style="left:1756px;top:480px;width:141px;height:25px;background:#36383d;border-radius:3px;"></div>
<div class="t" style="left:1651px;top:487.69px;font-size:11px;color:#c8c9cc;">XXL</div>
<div class="a" style="left:1755px;top:413px;width:143px;height:27px;background:transparent;border:1px solid #2a6fb5;border-radius:3px;"></div>
<div class="a" style="left:1624px;top:519px;width:288px;height:1px;background:#34363a;"></div>
<div class="t" style="left:1636px;top:533.69px;font-size:11px;font-weight:bold;color:#fff;">Text Options</div>
<svg class="a" style="left:1712.0px;top:535.5px;" width="8" height="7" viewBox="0 0 8 7"><path d="M0 0H8L4.0 7Z" fill="#fff"/></svg>
<svg class="a" style="left:1885px;top:532px;" width="12" height="13" viewBox="0 0 12 13"><path d="M3 4.5A5 5 0 1 0 8 3" fill="none" stroke="#888" stroke-width="1.3"/></svg>
<div class="a" style="left:1756px;top:564px;width:24px;height:7px;background:#3a3c41;"></div>
<div class="a" style="left:1781px;top:564px;width:24px;height:7px;background:#3a3c41;"></div>
<div class="a" style="left:1806px;top:564px;width:24px;height:7px;background:#3a3c41;"></div>
<div class="a" style="left:1831px;top:564px;width:24px;height:7px;background:#3a3c41;"></div>
<div class="a" style="left:1622px;top:579px;width:298px;height:3px;background:#232528;"></div>
<div class="a" style="left:1622px;top:582px;width:298px;height:30px;background:#24262a;"></div>
<div class="a" style="left:1622px;top:582px;width:58px;height:30px;background:#2b2d31;"></div>
<div class="t" style="left:1632px;top:591.69px;font-size:11px;font-weight:bold;color:#fff;">Design</div>
<div class="t" style="left:1691px;top:591.69px;font-size:11px;font-weight:bold;color:#8d8f93;">Theme</div>
<svg class="a" style="left:1897px;top:592px;" width="13" height="13" viewBox="0 0 13 13"><circle cx="5" cy="5" r="3.9" fill="none" stroke="#ddd" stroke-width="1.6"/><path d="M7.8 7.8L12 12" stroke="#ddd" stroke-width="1.9"/></svg>
<svg class="a" style="left:1638.0px;top:630.75px;" width="6" height="4.5" viewBox="0 0 6 4.5"><path d="M0 0H6L3.0 4.5Z" fill="#fff"/></svg>
<div class="t" style="left:1652px;top:627.00px;font-size:13px;font-weight:bold;color:#fff;">Pages</div>
<svg class="a" style="left:1646.0px;top:654.75px;" width="6" height="4.5" viewBox="0 0 6 4.5"><path d="M0 0H6L3.0 4.5Z" fill="#fff"/></svg>
<div class="t" style="left:1660px;top:651.00px;font-size:13px;font-weight:bold;color:#fff;">blog</div>
<svg class="a" style="left:1657px;top:675px;" width="10" height="13" viewBox="0 0 10 13"><path d="M0.6 0.6H6.5L9.4 3.5V12.4H0.6Z" fill="none" stroke="#8fb8d8" stroke-width="1.1"/></svg>
<div class="t" style="left:1675px;top:675.00px;font-size:13px;color:#fff;">paris-trip.html</div>
<svg class="a" style="left:1646px;top:699px;" width="10" height="13" viewBox="0 0 10 13"><path d="M0 0H6.5L10 3.5V13H0Z" fill="#3ea6e8"/></svg>
<div class="t" style="left:1665px;top:699.00px;font-size:13px;color:#fff;">index.html</div>
<svg class="a" style="left:1638.75px;top:726.0px;" width="4.5" height="6" viewBox="0 0 4.5 6"><path d="M0 0V6L4.5 3.0Z" fill="#fff"/></svg>
<div class="t" style="left:1652px;top:723.00px;font-size:13px;font-weight:bold;color:#fff;">Styles</div>
<svg class="a" style="left:1638.75px;top:750.0px;" width="4.5" height="6" viewBox="0 0 4.5 6"><path d="M0 0V6L4.5 3.0Z" fill="#fff"/></svg>
<div class="t" style="left:1652px;top:747.00px;font-size:13px;font-weight:bold;color:#fff;">JavaScript</div>
<svg class="a" style="left:1638.75px;top:774.0px;" width="4.5" height="6" viewBox="0 0 4.5 6"><path d="M0 0V6L4.5 3.0Z" fill="#fff"/></svg>
<div class="t" style="left:1652px;top:771.00px;font-size:13px;font-weight:bold;color:#fff;">Fonts</div>
<svg class="a" style="left:1638.0px;top:798.75px;" width="6" height="4.5" viewBox="0 0 6 4.5"><path d="M0 0H6L3.0 4.5Z" fill="#fff"/></svg>
<div class="t" style="left:1652px;top:795.00px;font-size:13px;font-weight:bold;color:#fff;">Images</div>
<svg class="a" style="left:1646px;top:819px;" width="10" height="12" viewBox="0 0 10 12"><path d="M0.6 0.6H6.5L9.4 3.5V11.4H0.6Z" fill="none" stroke="#3ea6e8" stroke-width="1.2"/><path d="M2 10L4.5 6.5L6 8.5L7 7.5L8.5 10Z" fill="#3ea6e8"/><circle cx="3.5" cy="4" r="1" fill="#3ea6e8"/></svg>
<div class="t" style="left:1665px;top:819.00px;font-size:13px;color:#fff;">amsterdam.jpg</div>
<svg class="a" style="left:1646px;top:843px;" width="10" height="12" viewBox="0 0 10 12"><path d="M0.6 0.6H6.5L9.4 3.5V11.4H0.6Z" fill="none" stroke="#3ea6e8" stroke-width="1.2"/><path d="M2 10L4.5 6.5L6 8.5L7 7.5L8.5 10Z" fill="#3ea6e8"/><circle cx="3.5" cy="4" r="1" fill="#3ea6e8"/></svg>
<div class="t" style="left:1665px;top:843.00px;font-size:13px;color:#fff;">barcelona.jpg</div>
<svg class="a" style="left:1646px;top:867px;" width="10" height="12" viewBox="0 0 10 12"><path d="M0.6 0.6H6.5L9.4 3.5V11.4H0.6Z" fill="none" stroke="#3ea6e8" stroke-width="1.2"/><path d="M2 10L4.5 6.5L6 8.5L7 7.5L8.5 10Z" fill="#3ea6e8"/><circle cx="3.5" cy="4" r="1" fill="#3ea6e8"/></svg>
<div class="t" style="left:1665px;top:867.00px;font-size:13px;color:#fff;">berlin.jpg</div>
<svg class="a" style="left:1646px;top:891px;" width="10" height="12" viewBox="0 0 10 12"><path d="M0.6 0.6H6.5L9.4 3.5V11.4H0.6Z" fill="none" stroke="#3ea6e8" stroke-width="1.2"/><path d="M2 10L4.5 6.5L6 8.5L7 7.5L8.5 10Z" fill="#3ea6e8"/><circle cx="3.5" cy="4" r="1" fill="#3ea6e8"/></svg>
<div class="t" style="left:1665px;top:891.00px;font-size:13px;color:#fff;">london.jpg</div>
<svg class="a" style="left:1646px;top:915px;" width="10" height="12" viewBox="0 0 10 12"><path d="M0.6 0.6H6.5L9.4 3.5V11.4H0.6Z" fill="none" stroke="#3ea6e8" stroke-width="1.2"/><path d="M2 10L4.5 6.5L6 8.5L7 7.5L8.5 10Z" fill="#3ea6e8"/><circle cx="3.5" cy="4" r="1" fill="#3ea6e8"/></svg>
<div class="t" style="left:1665px;top:915.00px;font-size:13px;color:#fff;">paris.jpg</div>
<svg class="a" style="left:1646px;top:939px;" width="10" height="12" viewBox="0 0 10 12"><path d="M0.6 0.6H6.5L9.4 3.5V11.4H0.6Z" fill="none" stroke="#3ea6e8" stroke-width="1.2"/><path d="M2 10L4.5 6.5L6 8.5L7 7.5L8.5 10Z" fill="#3ea6e8"/><circle cx="3.5" cy="4" r="1" fill="#3ea6e8"/></svg>
<div class="t" style="left:1665px;top:939.00px;font-size:13px;color:#fff;">prague.jpg</div>
<svg class="a" style="left:1646px;top:963px;" width="10" height="12" viewBox="0 0 10 12"><path d="M0.6 0.6H6.5L9.4 3.5V11.4H0.6Z" fill="none" stroke="#3ea6e8" stroke-width="1.2"/><path d="M2 10L4.5 6.5L6 8.5L7 7.5L8.5 10Z" fill="#3ea6e8"/><circle cx="3.5" cy="4" r="1" fill="#3ea6e8"/></svg>
<div class="t" style="left:1665px;top:963.00px;font-size:13px;color:#fff;">rome.jpg</div>
<div class="a" style="left:1748px;top:410px;width:141px;height:142px;background:#c6c7cb;border-radius:6px;box-shadow:0 2px 8px rgba(0,0,0,.35)"></div>
<div class="a" style="left:1753px;top:481px;width:131px;height:22px;background:#1870e0;border-radius:4px;"></div>
<svg class="a" style="left:1757px;top:423px;" width="11" height="9" viewBox="0 0 11 9"><path d="M1 4.5L4 8L10 0.8" fill="none" stroke="#222" stroke-width="1.6"/></svg>
<div class="t" style="left:1771px;top:420.00px;font-size:13px;color:#222;">Default</div>
<div class="t" style="left:1771px;top:442.00px;font-size:13px;color:#222;">1</div>
<div class="t" style="left:1771px;top:464.00px;font-size:13px;color:#222;">2</div>
<div class="t" style="left:1771px;top:486.00px;font-size:13px;font-weight:bold;color:#fff;">3</div>
<div class="t" style="left:1771px;top:508.00px;font-size:13px;color:#222;">4</div>
<div class="t" style="left:1771px;top:530.00px;font-size:13px;color:#222;">5</div>
<svg class="a" style="left:1786px;top:480px;" width="12" height="18" viewBox="0 0 12 18"><path d="M1 1V15L4.5 11.5L7 17L9 16L6.5 10.5H11Z" fill="#000" stroke="#fff" stroke-width="1"/></svg>
</body></html>
